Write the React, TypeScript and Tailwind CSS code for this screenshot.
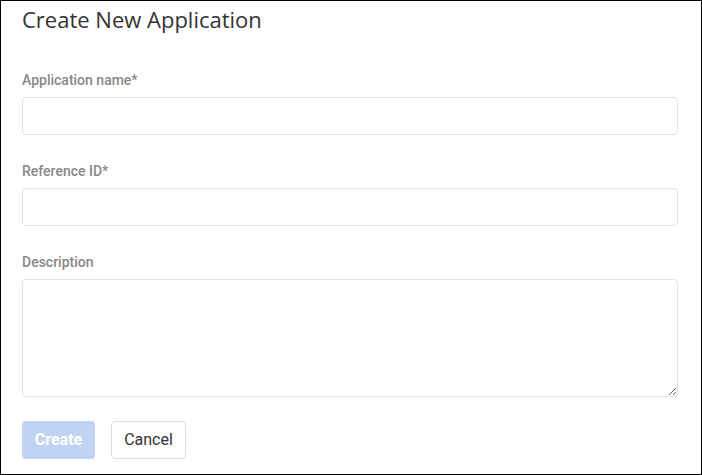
import React from "react";

export default function App() {
  const labelCls =
    "block text-[14px] leading-[20px] font-medium text-[#888888] [font-family:Roboto,'Liberation_Sans',sans-serif]";
  const inputCls =
    "mt-[7px] block w-full h-[38px] rounded-[4px] border border-[#e2e2e2] bg-white px-3 outline-none";
  return (
    <div className="w-[702px] h-[475px] border border-black bg-white pl-[21px] pr-[23px] pt-[3px] box-border [font-family:Roboto,'Liberation_Sans',sans-serif]">
      <h1 className="text-[22px] leading-[30px] text-[#333333] font-normal [font-family:'Open_Sans',sans-serif]">
        Create New Application
      </h1>
      <div className="mt-[36px] flex flex-col gap-[26px]">
        <div>
          <label className={labelCls}>Application name*</label>
          <input className={inputCls} />
        </div>
        <div>
          <label className={labelCls}>Reference ID*</label>
          <input className={inputCls} />
        </div>
        <div>
          <label className={labelCls}>Description</label>
          <textarea className="mt-[7px] block w-full h-[118px] rounded-[4px] border border-[#e2e2e2] bg-white px-3 py-2 outline-none" />
        </div>
      </div>
      <div className="mt-[24px] flex gap-4">
        <button className="h-[38px] w-[73px] rounded-[4px] bg-[#c1d3f3] text-white text-[16px] font-bold">
          Create
        </button>
        <button className="h-[38px] w-[75px] rounded-[4px] border border-[#dddddd] bg-white text-[#333333] text-[16px]">
          Cancel
        </button>
      </div>
    </div>
  );
}
